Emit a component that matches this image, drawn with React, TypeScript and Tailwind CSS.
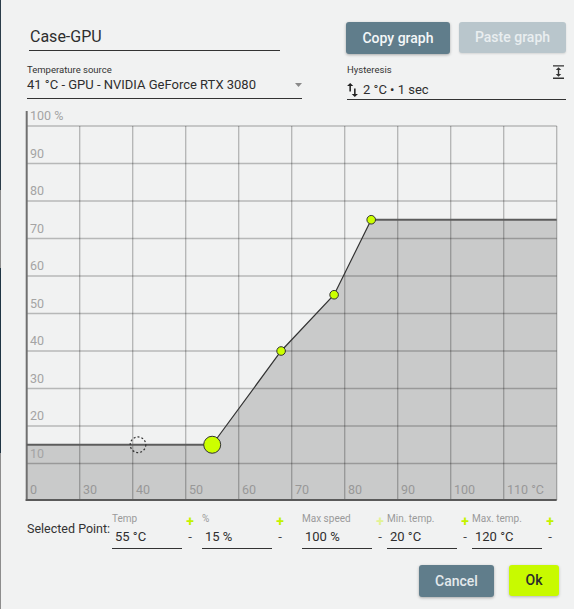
import React from "react";

// Fan curve editor: name, source, hysteresis, curve chart, point editor, actions.

const LIME = "#ccff00";

// Page-space helpers for the chart; the svg is placed at page (24, 108).
const OX = 24;
const OY = 108;
const tx = (t: number) => 26.7 + 5.3 * (t - 20) - OX;
const py = (p: number) => 501 - 3.75 * p - OY;

const curve: [number, number][] = [
  [55, 15],
  [68, 40],
  [78, 55],
  [85, 75],
];

function CurveChart() {
  const left = 26.7 - OX;
  const right = 556.7 - OX;
  const bottom = 500 - OY;
  const top100 = py(100);

  const fill = [
    [left, py(15)],
    ...curve.map(([t, p]) => [tx(t), py(p)]),
    [right, py(75)],
    [right, bottom],
    [left, bottom],
  ]
    .map(([x, y]) => `${x},${y}`)
    .join(" ");

  const xLabels = ["0", "30", "40", "50", "60", "70", "80", "90", "100", "110 °C"];

  return (
    <svg width={536} height={396} className="-ml-[2px] mt-[8px] block" style={{ overflow: "visible" }}>
      <polygon points={fill} fill="#c9caca" />

      {/* grid */}
      {Array.from({ length: 10 }, (_, i) => (
        <line
          key={`h${i}`}
          x1={left}
          x2={right}
          y1={py((i + 1) * 10)}
          y2={py((i + 1) * 10)}
          stroke="#000"
          strokeOpacity={0.24}
          strokeWidth={1.3}
        />
      ))}
      {Array.from({ length: 10 }, (_, i) => (
        <line
          key={`v${i}`}
          x1={left + 53 * (i + 1)}
          x2={left + 53 * (i + 1)}
          y1={top100}
          y2={bottom}
          stroke="#000"
          strokeOpacity={0.26}
          strokeWidth={1.3}
        />
      ))}

      {/* axis labels */}
      <g fontFamily="Roboto, sans-serif" fontSize={12.5} fill="#a4a4a4">
        <text x={30 - OX} y={120 - OY}>
          100 %
        </text>
        {Array.from({ length: 9 }, (_, i) => (
          <text key={`yl${i}`} x={30 - OX} y={py((i + 1) * 10) - 6}>
            {(i + 1) * 10}
          </text>
        ))}
        {xLabels.map((l, i) => (
          <text key={`xl${i}`} x={left + 53 * i + 3.3} y={494 - OY} fill="#989898">
            {l}
          </text>
        ))}
      </g>

      {/* axes */}
      <line x1={left} x2={left} y1={111 - OY} y2={501 - OY} stroke="#707070" strokeWidth={2} />
      <line x1={left - 1} x2={right} y1={bottom} y2={bottom} stroke="#5a5a5a" strokeWidth={2} />

      {/* curve */}
      <line x1={left} x2={tx(55)} y1={py(15)} y2={py(15)} stroke="#5c5c5c" strokeWidth={2} />
      <line x1={tx(85)} x2={right} y1={py(75)} y2={py(75)} stroke="#5c5c5c" strokeWidth={2} />
      <polyline
        points={curve.map(([t, p]) => `${tx(t)},${py(p)}`).join(" ")}
        fill="none"
        stroke="#333"
        strokeWidth={1.2}
      />

      {/* current temperature marker */}
      <circle cx={tx(41)} cy={py(15)} r={7.8} fill="none" stroke="#333" strokeWidth={1.2} strokeDasharray="2 2" />

      {curve.slice(1).map(([t, p]) => (
        <circle key={t} cx={tx(t)} cy={py(p)} r={4.3} fill={LIME} stroke="#333" strokeWidth={1} />
      ))}
      <circle cx={tx(55)} cy={py(15)} r={8.5} fill={LIME} stroke="#333" strokeWidth={1} />
    </svg>
  );
}

const fields = [
  { label: "Temp", value: "55 °C", width: "w-[90px]", plus: "text-[#c4f200]" },
  { label: "%", value: "15 %", width: "w-[100px]", plus: "text-[#c4f200]" },
  { label: "Max speed", value: "100 %", width: "w-[85px]", plus: "text-[#e2f394]" },
  { label: "Min. temp.", value: "20 °C", width: "w-[85px]", plus: "text-[#c4f200]" },
  { label: "Max. temp.", value: "120 °C", width: "w-[85px]", plus: "text-[#c4f200]" },
];

export default function App() {
  return (
    <div className="flex h-[609px] w-[574px] overflow-hidden bg-[#f1f2f2] font-[family-name:Roboto,'Liberation_Sans',sans-serif] text-[#2e2e2e]">
      {/* window edge behind the dialog */}
      <div className="flex w-[1px] flex-col">
        <div className="h-[190px] bg-[#2b3d4a]" />
        <div className="h-[78px] bg-[#8c8c8c]" />
        <div className="h-[185px] bg-[#1f3544]" />
        <div className="flex-1 bg-[#8d8d8d]" />
      </div>

      <div className="flex flex-1 flex-col pl-[25px] pr-[8px]">
        {/* name + graph clipboard */}
        <div className="mt-[22px] flex h-[32px] items-start">
          <div className="ml-[3px] h-[29px] w-[251px] border-b border-[#333] pl-[1px] pt-[5px] text-[16px] leading-[20px]">
            Case-GPU
          </div>
          <button className="ml-auto h-[32px] w-[104px] rounded-[3px] bg-[#607d8b] text-[14px] font-medium text-[#f4f7f8] shadow-[0_1px_3px_rgba(0,0,0,0.3)]">
            Copy graph
          </button>
          <button className="ml-[9px] h-[31px] w-[107px] rounded-[3px] bg-[#b9c6cc] text-[14px] font-medium text-[#e9eef0] shadow-[0_1px_2px_rgba(0,0,0,0.12)]">
            Paste graph
          </button>
        </div>

        {/* source + hysteresis */}
        <div className="mt-[10px] flex items-start">
          <div className="ml-[1px] w-[275px] border-b border-[#333] pb-[5px]">
            <div className="text-[9.5px] leading-[12px] text-[#333]">Temperature source</div>
            <div className="mt-[1px] flex items-center justify-between text-[13px] leading-[16px]">
              <span>41 °C - GPU - NVIDIA GeForce RTX 3080</span>
              <svg width="7" height="4" viewBox="0 0 7 4" className="mr-[0px]">
                <path d="M0 0h7L3.5 4z" fill="#8a8a8a" />
              </svg>
            </div>
          </div>

          <div className="ml-auto w-[219px] border-b border-[#333] pb-[1px]">
            <div className="flex h-[12px] justify-between">
              <span className="text-[9.5px] leading-[12px] text-[#333]">Hysteresis</span>
              <svg width="11" height="14" viewBox="4 2 16 20" className="mr-[2px] mt-[1px] shrink-0">
                <path
                  d="M13 9v6h3l-4 4-4-4h3V9H8l4-4 4 4h-3M4 2h16v2H4V2m0 18h16v2H4v-2z"
                  fill="#333"
                />
              </svg>
            </div>
            <div className="mt-[6px] flex items-center text-[13px] leading-[16px]">
              <svg width="11" height="14" viewBox="5 3 14 18" className="shrink-0">
                <path d="M16 17.01V10h-2v7.01h-3L15 21l4-3.99h-3zM9 3L5 6.99h3V14h2V6.99h3L9 3z" fill="#222" />
              </svg>
              <span className="ml-[5px]">2 °C • 1 sec</span>
            </div>
          </div>
        </div>

        <CurveChart />

        {/* selected point editor */}
        <div className="mt-[9px] flex items-start">
          <div className="ml-[1px] mt-[8px] w-[85px] whitespace-nowrap text-[12.5px] leading-[16px] text-[#333]">
            Selected Point:
          </div>
          {fields.map((f) => (
            <div key={f.label} className={`flex ${f.width}`}>
              <div className="w-[70px] shrink-0">
                <div className="text-[10px] leading-[12px] text-[#9a9a9a]">{f.label}</div>
                <div className="mt-[4px] border-b border-[#333] pb-[3px] pl-[3px] text-[13px] leading-[16px]">
                  {f.value}
                </div>
              </div>
              <div className="ml-[4px] flex w-[8px] flex-col items-center">
                <span className={`mt-[1px] text-[14px] font-bold leading-[14px] ${f.plus}`}>+</span>
                <span className="mt-[1px] text-[13px] leading-[16px] text-[#444]">-</span>
              </div>
            </div>
          ))}
        </div>

        {/* actions */}
        <div className="mr-[7px] mt-[16px] flex justify-end">
          <button className="h-[32px] w-[75px] rounded-[3px] bg-[#607d8b] text-[14px] font-medium text-[#e3e9ec] shadow-[0_1px_3px_rgba(0,0,0,0.3)]">
            Cancel
          </button>
          <button className="ml-[15px] h-[31px] w-[50px] rounded-[3px] bg-[#c8fa00] text-[14px] font-medium text-[#2b2b2b] shadow-[0_1px_3px_rgba(0,0,0,0.25)]">
            Ok
          </button>
        </div>
      </div>
    </div>
  );
}
